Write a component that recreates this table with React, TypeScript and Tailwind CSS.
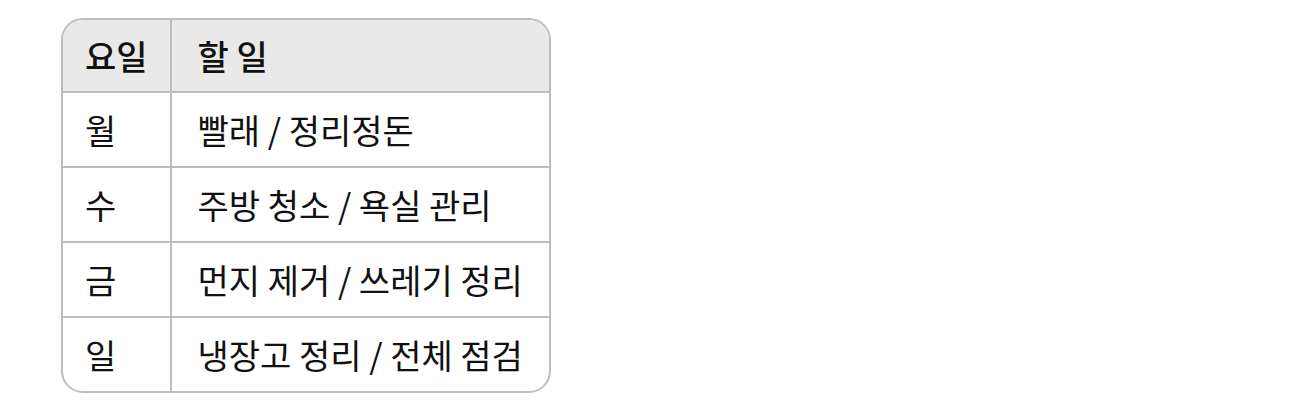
import React from "react";

const rows: [string, string][] = [
  ["월", "빨래 / 정리정돈"],
  ["수", "주방 청소 / 욕실 관리"],
  ["금", "먼지 제거 / 쓰레기 정리"],
  ["일", "냉장고 정리 / 전체 점검"],
];

export default function App() {
  return (
    <div
      className="w-[1290px] h-[406px] bg-white pl-[61px] pt-[18px]"
      style={{ fontFamily: '"Noto Sans CJK KR", "Noto Sans", sans-serif' }}
    >
      <div className="inline-block rounded-[22px] border-2 border-[#bdbdbd] overflow-hidden">
        <table className="border-separate border-spacing-0 text-[34px] leading-[45px] text-[#111]">
          <thead>
            <tr className="bg-[#e9e9e9]">
              <th className="px-[22px] pt-[13px] pb-[13px] text-left font-medium border-r-2 border-b-2 border-[#bdbdbd]">요일</th>
              <th className="px-[26px] pt-[13px] pb-[13px] text-left font-medium border-b-2 border-[#bdbdbd]">할 일</th>
            </tr>
          </thead>
          <tbody>
            {rows.map(([d, t], i) => (
              <tr key={d}>
                <td className={`px-[22px] py-[14px] border-r-2 border-[#bdbdbd] ${i < rows.length - 1 ? "border-b-2" : ""}`}>{d}</td>
                <td className={`px-[26px] py-[14px] border-[#bdbdbd] ${i < rows.length - 1 ? "border-b-2" : ""}`}>{t}</td>
              </tr>
            ))}
          </tbody>
        </table>
      </div>
    </div>
  );
}
